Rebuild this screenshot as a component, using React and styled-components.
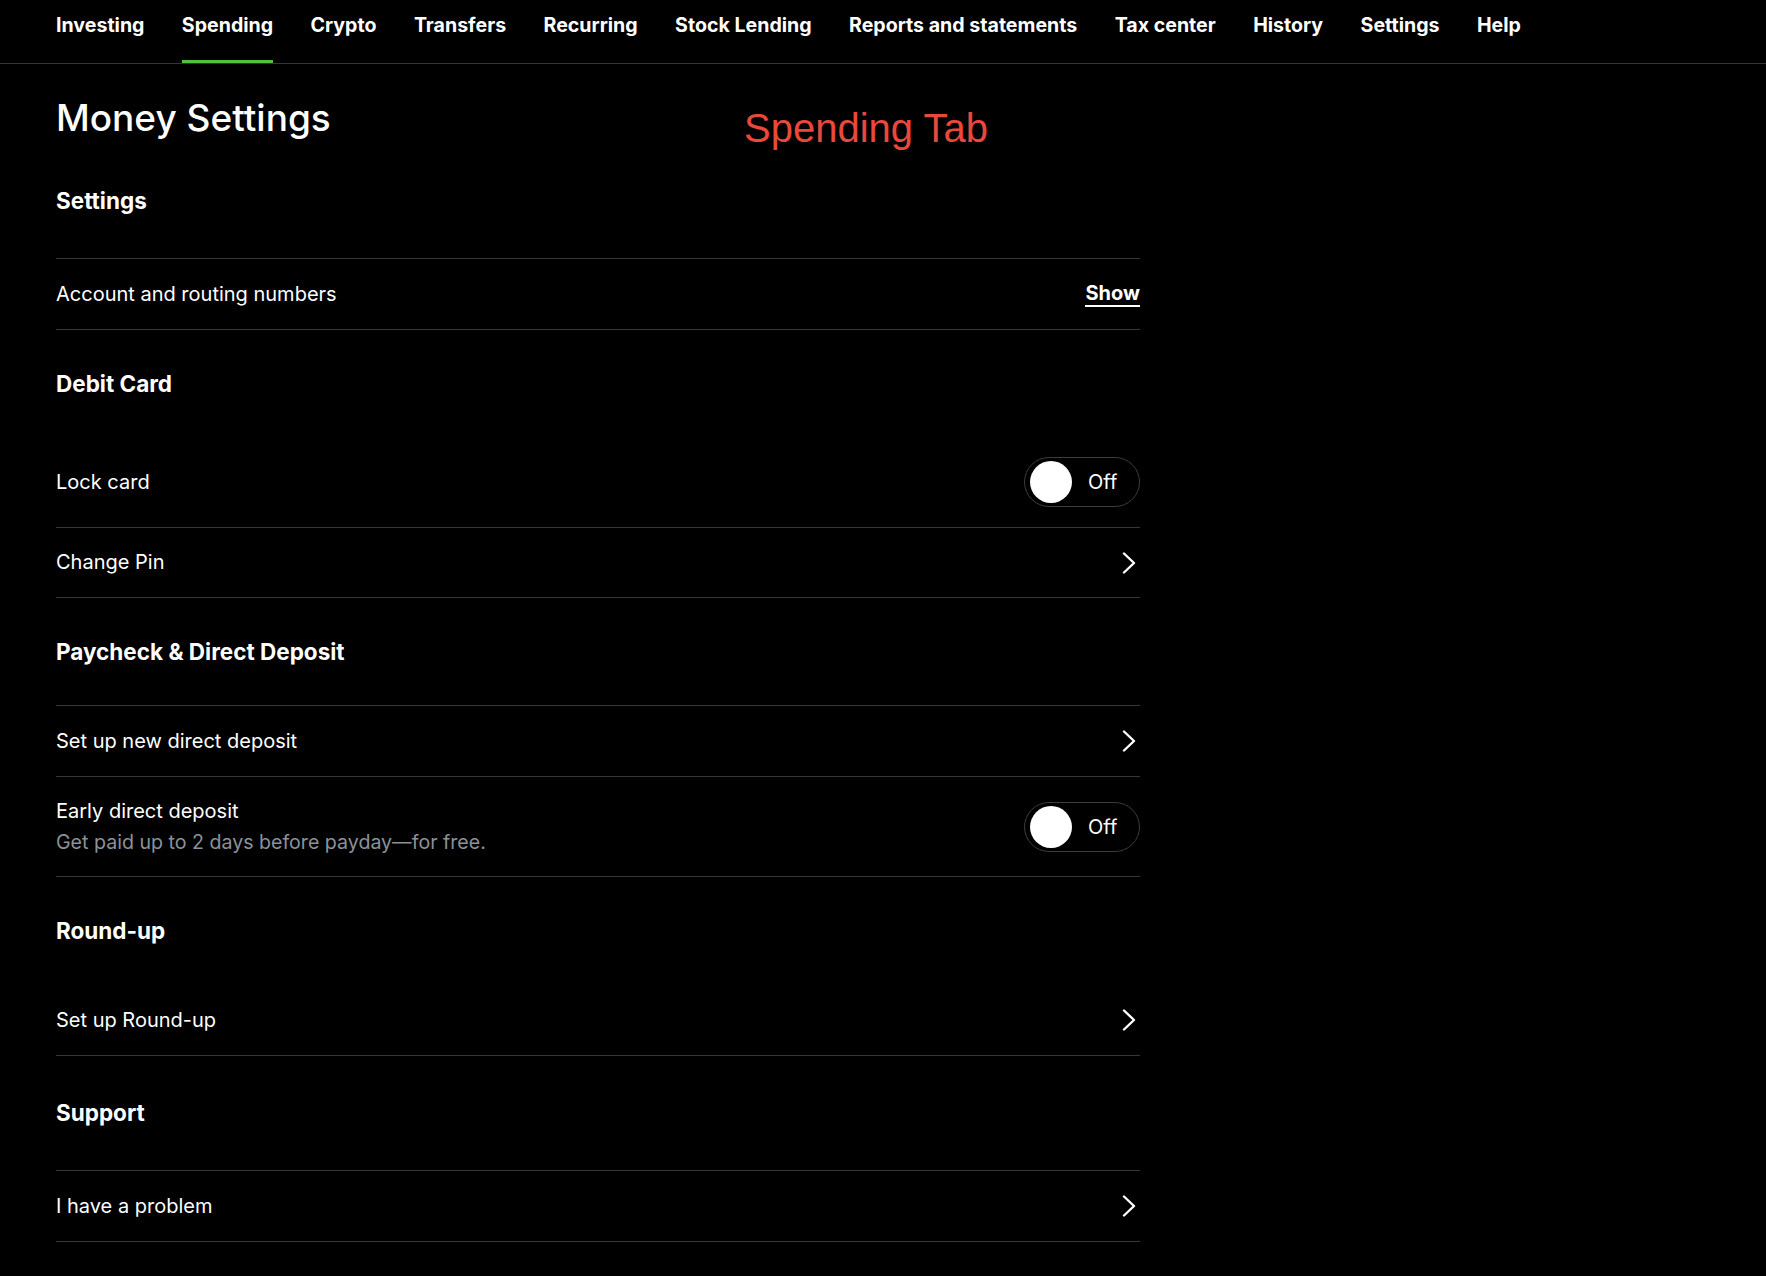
import React from "react";
import styled, { createGlobalStyle } from "styled-components";

const GlobalStyle = createGlobalStyle`
  html, body {
    margin: 0;
    padding: 0;
    background: #000;
  }
  body {
    font-family: Inter, "Noto Sans", sans-serif;
    color: #fff;
    -webkit-font-smoothing: antialiased;
  }
`;

const Page = styled.div`
  min-height: 1276px;
  background: #000;
`;

const Nav = styled.nav`
  display: flex;
  padding-left: 56px;
  height: 64px;
  box-sizing: border-box;
  border-bottom: 1px solid #333538;
`;

const NavItem = styled.a`
  box-sizing: border-box;
  height: 63px;
  margin-right: 37.4px;
  padding-top: 13px;
  font-size: 19.6px;
  line-height: 24px;
  font-weight: 700;
  color: #fff;
  white-space: nowrap;
  border-bottom: 3px solid ${(p) => (p.$active ? "#52c13a" : "transparent")};
  cursor: pointer;
`;

const Main = styled.main`
  width: 1084px;
  padding-left: 56px;
`;

const Header = styled.header`
  display: grid;
  grid-template-columns: 688px auto;
  align-items: start;
  height: 44px;
  padding-top: 32px;
  margin-bottom: 3px;
`;

const Title = styled.h1`
  margin: 0;
  font-size: 37px;
  line-height: 44px;
  font-weight: 500;
`;

const Annotation = styled.span`
  margin-top: 12px;
  font-family: "Liberation Sans", Arial, sans-serif;
  font-size: 40px;
  line-height: 40px;
  color: #e8493b;
`;

const SectionHeading = styled.h2`
  box-sizing: border-box;
  display: flex;
  align-items: center;
  height: ${(p) => p.$h}px;
  margin: 0;
  font-size: 22.5px;
  line-height: 28px;
  font-weight: 700;
  border-bottom: ${(p) => (p.$divider ? "1px solid #33373c" : "none")};
`;

const Row = styled.div`
  box-sizing: border-box;
  display: flex;
  align-items: center;
  justify-content: space-between;
  height: ${(p) => p.$h || 71}px;
  border-bottom: 1px solid #33373c;
  cursor: pointer;
`;

const RowText = styled.div`
  display: flex;
  flex-direction: column;
`;

const Label = styled.span`
  font-size: 20px;
  line-height: 31px;
  color: #fff;
`;

const Sub = styled.span`
  font-size: 19.6px;
  line-height: 31px;
  color: #8b9298;
`;

const ShowLink = styled.a`
  font-size: 20px;
  line-height: 22px;
  font-weight: 700;
  color: #fff;
  border-bottom: 2px solid #fff;
  padding-bottom: 1px;
  margin-top: 1px;
`;

const Toggle = styled.div`
  box-sizing: border-box;
  display: flex;
  align-items: center;
  width: 116px;
  height: 50px;
  padding: 0 5px;
  border: 1px solid #3a3c40;
  border-radius: 25px;
`;

const Knob = styled.span`
  width: 42px;
  height: 42px;
  border-radius: 50%;
  background: #fff;
`;

const ToggleText = styled.span`
  margin-left: 16px;
  font-size: 20px;
  color: #fff;
`;

const Chevron = () => (
  <svg width="14" height="22" viewBox="0 0 14 22" style={{ marginRight: 4 }}>
    <polyline
      points="2,1.5 12,11 2,20.5"
      fill="none"
      stroke="#fff"
      strokeWidth="2.4"
      strokeLinecap="round"
      strokeLinejoin="round"
    />
  </svg>
);

const OffSwitch = () => (
  <Toggle>
    <Knob />
    <ToggleText>Off</ToggleText>
  </Toggle>
);

const tabs = [
  "Investing",
  "Spending",
  "Crypto",
  "Transfers",
  "Recurring",
  "Stock Lending",
  "Reports and statements",
  "Tax center",
  "History",
  "Settings",
  "Help",
];

const App = () => {
  return (
    <Page>
      <GlobalStyle />
      <Nav>
        {tabs.map((tab) => (
          <NavItem key={tab} $active={tab === "Spending"}>
            {tab}
          </NavItem>
        ))}
      </Nav>
      <Main>
        <Header>
          <Title>Money Settings</Title>
          <Annotation>Spending Tab</Annotation>
        </Header>

        <SectionHeading $h={116} $divider>Settings</SectionHeading>
        <Row>
          <Label>Account and routing numbers</Label>
          <ShowLink>Show</ShowLink>
        </Row>

        <SectionHeading $h={107}>Debit Card</SectionHeading>
        <Row $h={91}>
          <Label>Lock card</Label>
          <OffSwitch />
        </Row>
        <Row $h={70}>
          <Label>Change Pin</Label>
          <Chevron />
        </Row>

        <SectionHeading $h={108} $divider>Paycheck &amp; Direct Deposit</SectionHeading>
        <Row>
          <Label>Set up new direct deposit</Label>
          <Chevron />
        </Row>
        <Row $h={100}>
          <RowText>
            <Label>Early direct deposit</Label>
            <Sub>Get paid up to 2 days before payday—for free.</Sub>
          </RowText>
          <OffSwitch />
        </Row>

        <SectionHeading $h={108}>Round-up</SectionHeading>
        <Row>
          <Label>Set up Round-up</Label>
          <Chevron />
        </Row>

        <SectionHeading $h={115} $divider>Support</SectionHeading>
        <Row>
          <Label>I have a problem</Label>
          <Chevron />
        </Row>
      </Main>
    </Page>
  );
};

export default App;
